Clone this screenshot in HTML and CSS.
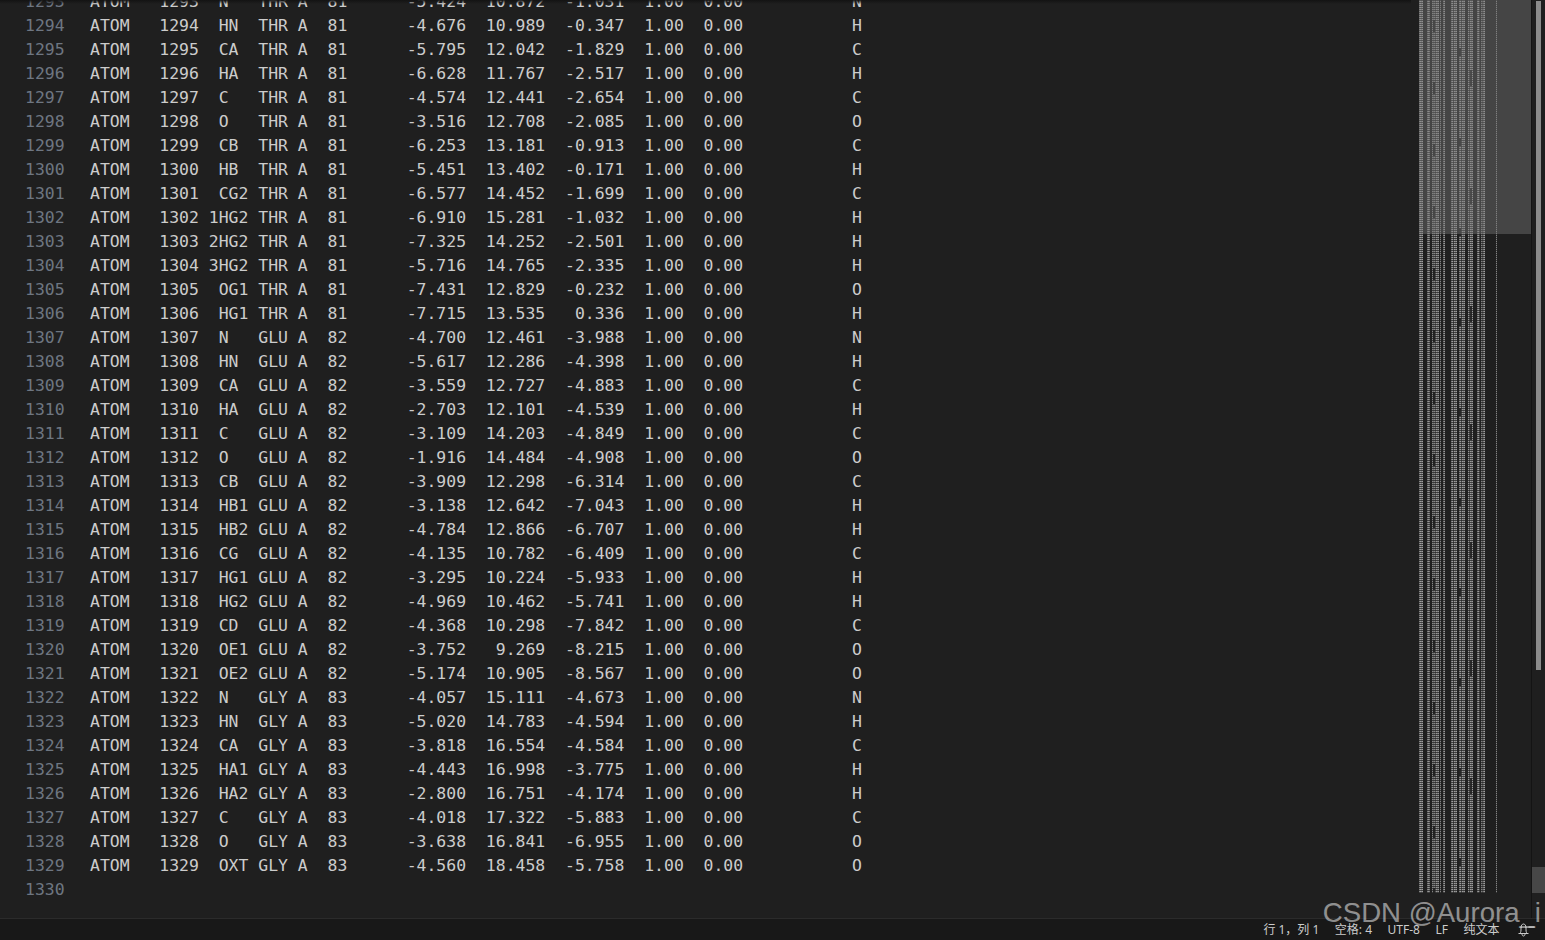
FILE: index.html
```html
<!DOCTYPE html>
<html lang="zh">
<head>
<meta charset="utf-8">
<title>protein.pdb</title>
<link rel="stylesheet" href="styles.css">
</head>
<body>
<div class="window">
  <main class="editor">
    <div class="scroll-shadow"></div>
    <pre class="gutter">1293
1294
1295
1296
1297
1298
1299
1300
1301
1302
1303
1304
1305
1306
1307
1308
1309
1310
1311
1312
1313
1314
1315
1316
1317
1318
1319
1320
1321
1322
1323
1324
1325
1326
1327
1328
1329
1330</pre>
    <pre class="code">ATOM   1293  N   THR A  81      -5.424  10.872  -1.031  1.00  0.00           N
ATOM   1294  HN  THR A  81      -4.676  10.989  -0.347  1.00  0.00           H
ATOM   1295  CA  THR A  81      -5.795  12.042  -1.829  1.00  0.00           C
ATOM   1296  HA  THR A  81      -6.628  11.767  -2.517  1.00  0.00           H
ATOM   1297  C   THR A  81      -4.574  12.441  -2.654  1.00  0.00           C
ATOM   1298  O   THR A  81      -3.516  12.708  -2.085  1.00  0.00           O
ATOM   1299  CB  THR A  81      -6.253  13.181  -0.913  1.00  0.00           C
ATOM   1300  HB  THR A  81      -5.451  13.402  -0.171  1.00  0.00           H
ATOM   1301  CG2 THR A  81      -6.577  14.452  -1.699  1.00  0.00           C
ATOM   1302 1HG2 THR A  81      -6.910  15.281  -1.032  1.00  0.00           H
ATOM   1303 2HG2 THR A  81      -7.325  14.252  -2.501  1.00  0.00           H
ATOM   1304 3HG2 THR A  81      -5.716  14.765  -2.335  1.00  0.00           H
ATOM   1305  OG1 THR A  81      -7.431  12.829  -0.232  1.00  0.00           O
ATOM   1306  HG1 THR A  81      -7.715  13.535   0.336  1.00  0.00           H
ATOM   1307  N   GLU A  82      -4.700  12.461  -3.988  1.00  0.00           N
ATOM   1308  HN  GLU A  82      -5.617  12.286  -4.398  1.00  0.00           H
ATOM   1309  CA  GLU A  82      -3.559  12.727  -4.883  1.00  0.00           C
ATOM   1310  HA  GLU A  82      -2.703  12.101  -4.539  1.00  0.00           H
ATOM   1311  C   GLU A  82      -3.109  14.203  -4.849  1.00  0.00           C
ATOM   1312  O   GLU A  82      -1.916  14.484  -4.908  1.00  0.00           O
ATOM   1313  CB  GLU A  82      -3.909  12.298  -6.314  1.00  0.00           C
ATOM   1314  HB1 GLU A  82      -3.138  12.642  -7.043  1.00  0.00           H
ATOM   1315  HB2 GLU A  82      -4.784  12.866  -6.707  1.00  0.00           H
ATOM   1316  CG  GLU A  82      -4.135  10.782  -6.409  1.00  0.00           C
ATOM   1317  HG1 GLU A  82      -3.295  10.224  -5.933  1.00  0.00           H
ATOM   1318  HG2 GLU A  82      -4.969  10.462  -5.741  1.00  0.00           H
ATOM   1319  CD  GLU A  82      -4.368  10.298  -7.842  1.00  0.00           C
ATOM   1320  OE1 GLU A  82      -3.752   9.269  -8.215  1.00  0.00           O
ATOM   1321  OE2 GLU A  82      -5.174  10.905  -8.567  1.00  0.00           O
ATOM   1322  N   GLY A  83      -4.057  15.111  -4.673  1.00  0.00           N
ATOM   1323  HN  GLY A  83      -5.020  14.783  -4.594  1.00  0.00           H
ATOM   1324  CA  GLY A  83      -3.818  16.554  -4.584  1.00  0.00           C
ATOM   1325  HA1 GLY A  83      -4.443  16.998  -3.775  1.00  0.00           H
ATOM   1326  HA2 GLY A  83      -2.800  16.751  -4.174  1.00  0.00           H
ATOM   1327  C   GLY A  83      -4.018  17.322  -5.883  1.00  0.00           C
ATOM   1328  O   GLY A  83      -3.638  16.841  -6.955  1.00  0.00           O
ATOM   1329  OXT GLY A  83      -4.560  18.458  -5.758  1.00  0.00           O
</pre>
    <aside class="minimap">
      <div class="minimap-text"></div>
      <div class="minimap-slider"></div>
    </aside>
    <aside class="scrollbar">
      <div class="ruler-mark"></div>
      <div class="scroll-thumb"></div>
    </aside>
  </main>
  <footer class="status">
    <span>行 1，列 1</span>
    <span>空格: 4</span>
    <span>UTF-8</span>
    <span>LF</span>
    <span>纯文本</span>
    <svg class="bell" width="17" height="14" viewBox="0 0 17 14" fill="none" stroke="#cccccc" stroke-width="1">
      <path d="M.5 10.500h10M2 10.500C3 9 3 8 3 5 3 2.500 4 1 5.500 1S8 2.500 8 5c0 3 0 4 1 5.500M4 11c0 1.300 .6 2 1.500 2S7 12.300 7 11M10.500 4h6"/>
    </svg>
  </footer>
  <div class="watermark">CSDN @Aurora_i</div>
</div>
</body>
</html>
```
FILE: styles.css
```css
* { box-sizing: border-box; }

html, body {
  margin: 0;
  height: 100%;
  overflow: hidden;
  background: #1f1f1f;
}

.window {
  position: relative;
  display: flex;
  flex-direction: column;
  height: 100vh;
}

.editor {
  position: relative;
  flex: 1;
  display: flex;
  min-height: 0;
  overflow: hidden;
  background: #1f1f1f;
}

.scroll-shadow {
  position: absolute;
  top: 0;
  left: 0;
  right: 134px;
  height: 4px;
  background: linear-gradient(to bottom, #131313, rgba(19, 19, 19, 0));
  z-index: 2;
}

.gutter,
.code {
  margin: -10px 0 0;
  font-family: "DejaVu Sans Mono", monospace;
  font-size: 16.44px;
  line-height: 24px;
}

.gutter {
  flex: none;
  width: 90px;
  padding-left: 25px;
  color: #6e7681;
}

.code {
  flex: 1;
  min-width: 0;
  color: #cccccc;
}

.minimap {
  position: relative;
  flex: none;
  width: 112px;
}

.minimap-text {
  width: 78px;
  height: 893px;
  background-color: transparent;
  background-image:
    repeating-linear-gradient(to bottom, rgba(31, 31, 31, .72) 0 1px, transparent 1px 2px),
    repeating-linear-gradient(to right, rgba(31, 31, 31, .22) 0 1px, transparent 1px 2px),
    linear-gradient(to bottom, #262626 0 12px, transparent 12px),
    linear-gradient(to bottom, #2a2a2a 0 8px, transparent 8px),
    linear-gradient(to bottom, #2f2f2f 0 16px, transparent 16px),
    linear-gradient(to right,
      #a0a0a0 0 4px, transparent 4px 8px,
      #969696 8px 11px, transparent 11px 13px,
      #868686 13px 16px, #646464 16px 17px,
      #969696 17px 20px, transparent 20px 21px,
      #828282 21px 22px, transparent 22px 24px,
      #969696 24px 26px, transparent 26px 32px,
      #9c9c9c 32px 34px, #525252 34px 35px,
      #9c9c9c 35px 38px, transparent 38px 40px,
      #9c9c9c 40px 42px, #525252 42px 43px,
      #9c9c9c 43px 46px, transparent 46px 49px,
      #9c9c9c 49px 50px, #5a5a5a 50px 51px,
      #9c9c9c 51px 54px, transparent 54px 58px,
      #9c9c9c 58px 60px, #5a5a5a 60px 61px,
      transparent 61px 62px, #9c9c9c 62px 63px,
      #5a5a5a 63px 64px, #9c9c9c 64px 66px,
      transparent 66px 77px, #848484 77px 78px, transparent 78px);
  background-size:
    auto, auto,
    2px 62px,
    2px 90px,
    2px 118px,
    auto;
  background-position:
    0 0, 0 0,
    14px 20px,
    40px 48px,
    51px 70px,
    0 0;
  background-repeat: repeat, repeat, repeat-y, repeat-y, repeat-y, no-repeat;
}

.minimap-slider {
  position: absolute;
  top: 0;
  left: 0;
  right: 0;
  height: 234px;
  background: rgba(121, 121, 121, .42);
}

.scrollbar {
  position: relative;
  flex: none;
  width: 14px;
  border-left: 1px solid #141414;
}

.ruler-mark {
  position: absolute;
  top: 1px;
  left: 4px;
  width: 5px;
  height: 669px;
  background: #8b8b8b;
}

.scroll-thumb {
  position: absolute;
  top: 867px;
  left: 0;
  right: 0;
  height: 26px;
  background: #474747;
}

.status {
  flex: none;
  height: 22px;
  display: flex;
  align-items: center;
  justify-content: flex-end;
  gap: 15.5px;
  padding-right: 10px;
  border-top: 1px solid #2b2b2b;
  background: #181818;
  color: #cccccc;
  font-family: "Noto Sans", "Noto Sans CJK SC", sans-serif;
  font-size: 12px;
  line-height: 21px;
}

.bell {
  flex: none;
  margin-left: 3px;
}

.watermark {
  position: absolute;
  top: 896px;
  right: 4px;
  color: rgba(255, 255, 255, .52);
  font-family: "Liberation Sans", sans-serif;
  font-size: 27.6px;
  line-height: 34px;
  white-space: nowrap;
}
```
